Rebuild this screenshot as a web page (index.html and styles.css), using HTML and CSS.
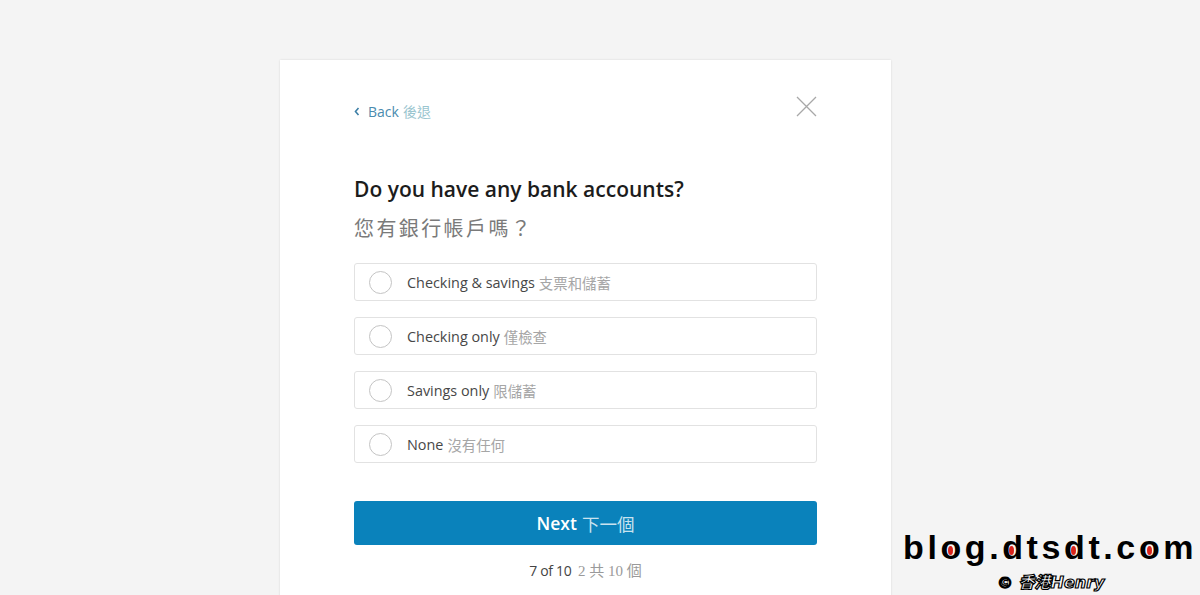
FILE: index.html
```html
<!DOCTYPE html>
<html lang="zh-Hant">
<head>
<meta charset="utf-8">
<title>Bank accounts</title>
<link rel="stylesheet" href="styles.css">
</head>
<body>
<div class="page">
  <div class="card">
    <div class="topbar">
      <a class="back" href="#"><svg class="chev" width="6" height="9" viewBox="0 0 6 9"><path d="M4.5 1 L1.5 4.5 L4.5 8" fill="none" stroke="#3d7fa6" stroke-width="1.6"/></svg><span class="back-en">Back</span> <span class="back-zh">後退</span></a>
      <svg class="close" width="21" height="21" viewBox="0 0 21 21"><path d="M1 1 L20 20 M20 1 L1 20" stroke="#a8a8a8" stroke-width="1.3" fill="none"/></svg>
    </div>
    <h1 class="title">Do you have any bank accounts?</h1>
    <p class="subtitle">您有銀行帳戶嗎？</p>
    <div class="options">
      <label class="option"><span class="radio"></span><span class="opt-en">Checking &amp; savings</span> <span class="opt-zh">支票和儲蓄</span></label>
      <label class="option"><span class="radio"></span><span class="opt-en">Checking only</span> <span class="opt-zh">僅檢查</span></label>
      <label class="option"><span class="radio"></span><span class="opt-en">Savings only</span> <span class="opt-zh">限儲蓄</span></label>
      <label class="option"><span class="radio"></span><span class="opt-en">None</span> <span class="opt-zh">沒有任何</span></label>
    </div>
    <button class="next"><span class="next-en">Next</span> <span class="next-zh">下一個</span></button>
    <div class="progress"><span class="prog-en">7 of 10</span> <span class="prog-zh">2 共 10 個</span></div>
  </div>
</div>
<div class="watermark">
  <div class="wm-url">b<span class="outl">l</span><span class="dot dot-o">o</span>g.<span class="dot dot-d">d</span>ts<span class="dot dot-d">d</span>t.c<span class="dot dot-o">o</span>m</div>
  <div class="wm-sign">© 香港Henry</div>
</div>
</body>
</html>
```
FILE: styles.css
```css
html, body {
  margin: 0;
  padding: 0;
  height: 100%;
  overflow: hidden;
}
body {
  background: #f4f4f4;
  font-family: "Open Sans", "Noto Sans CJK TC", sans-serif;
  position: relative;
}
.page {
  display: flex;
  justify-content: center;
  padding-top: 60px;
  padding-right: 29px;
}
.card {
  width: 611px;
  height: 560px;
  background: #fff;
  box-shadow: 0 0 2px rgba(0,0,0,0.12);
  box-sizing: border-box;
  padding: 35px 74px 0 74px;
  display: flex;
  flex-direction: column;
}
.topbar {
  display: flex;
  justify-content: space-between;
  align-items: flex-start;
  height: 60px;
}
.back {
  display: flex;
  align-items: center;
  text-decoration: none;
  font-size: 14px;
  margin-top: 6px;
}
.chev { margin-right: 8px; margin-top: 1px; }
.back-en { color: #4a8bae; }
.back-zh { color: #9ac5cf; margin-left: 4px; }
.close { margin-top: 1px; }
.title {
  font-size: 21px;
  font-weight: 600;
  color: #1c1c1c;
  margin: 20px 0 0 0;
  line-height: 28px;
}
.subtitle {
  font-size: 20px;
  color: #7a7a7a;
  margin: 12px 0 0 0;
  line-height: 28px;
  letter-spacing: 2.4px;
}
.options {
  display: flex;
  flex-direction: column;
  gap: 16px;
  margin-top: 20px;
}
.option {
  display: flex;
  align-items: center;
  height: 38px;
  border: 1px solid #e2e2e2;
  border-radius: 3px;
  box-sizing: border-box;
  padding-left: 14px;
  font-size: 14.4px;
}
.radio {
  width: 23px;
  height: 23px;
  border: 1px solid #c4c4c4;
  border-radius: 50%;
  box-sizing: border-box;
  margin-right: 15px;
  flex: none;
}
.opt-en { color: #474747; }
.opt-zh { color: #a6a6a6; margin-left: 4px; }
.next {
  margin-top: 38px;
  height: 44px;
  border: none;
  border-radius: 3px;
  background: #0a82bb;
  font-family: inherit;
  font-size: 17.5px;
  display: flex;
  align-items: center;
  justify-content: center;
  padding: 0;
}
.next-en { color: #fff; font-weight: 600; }
.next-zh { color: #c9e2ef; margin-left: 5px; }
.progress {
  margin-top: 16px;
  text-align: center;
  font-size: 14px;
  line-height: 20px;
}
.prog-en { color: #444; letter-spacing: -0.3px; }
.prog-zh { color: #9a9a9a; font-family: "Liberation Serif", "Noto Sans CJK TC", serif; font-size: 15px; margin-left: 3px; }
.watermark {
  position: absolute;
  left: 903px;
  top: 527px;
  width: 297px;
}
.wm-url {
  font-family: "Liberation Sans", sans-serif;
  font-weight: bold;
  font-size: 34px;
  line-height: 40px;
  color: #000;
  letter-spacing: 3.6px;
  white-space: nowrap;
}
.dot { position: relative; }
.dot::after {
  content: "";
  position: absolute;
  width: 5px;
  height: 9px;
  border-radius: 50%;
  background: #d9241b;
  top: 18px;
}
.dot-o::after { left: 8px; }
.dot-d::after { left: 7px; }
.wm-sign {
  font-family: "DejaVu Sans", "Noto Sans CJK TC", sans-serif;
  font-weight: 900;
  font-style: italic;
  font-size: 16px;
  color: #fff;
  -webkit-text-stroke: 1.2px #000;
  margin-left: 94px;
  margin-top: 6px;
  line-height: 20px;
}
```
